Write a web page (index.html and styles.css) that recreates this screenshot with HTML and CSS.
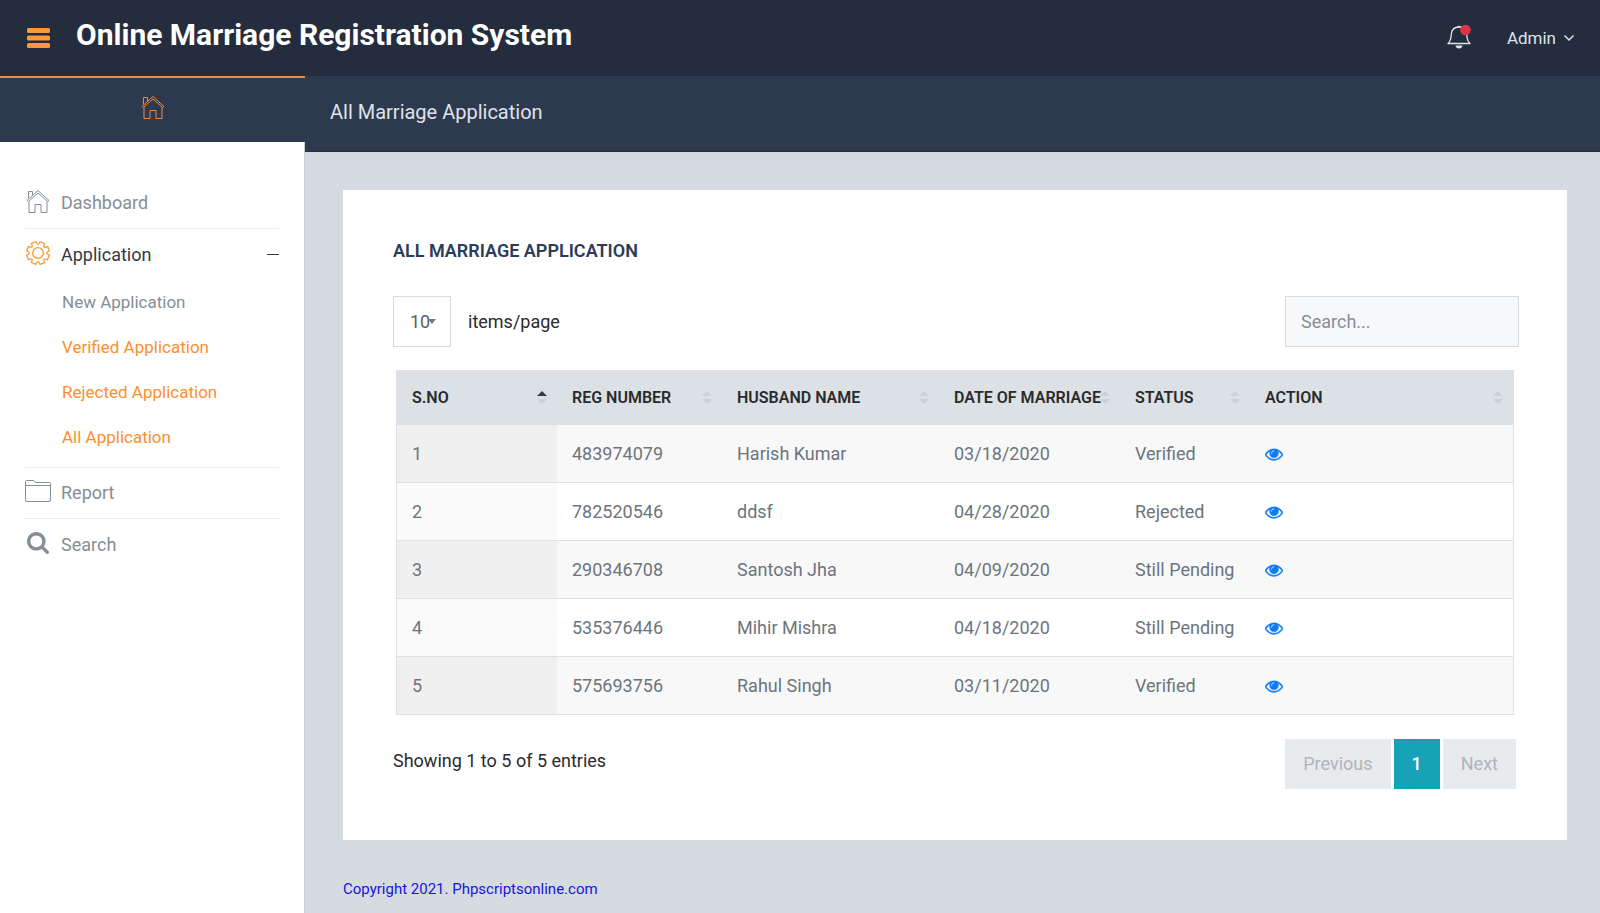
FILE: index.html
```html
<!DOCTYPE html>
<html lang="en">
<head>
<meta charset="utf-8">
<title>Online Marriage Registration System</title>
<link rel="stylesheet" href="styles.css">
</head>
<body>
<svg class="sprite" aria-hidden="true">
  <symbol id="house" viewBox="0 0 24 24"><path d="M1 11.500 12 1.500 23 11.500 21.800 12.700 12 4 2.200 12.700ZM2.500 9.500V2.500H6.500V6M3 12.500V23.500H9V15.500H15V23.500H21V12.500"/></symbol>
  <symbol id="eye" viewBox="0 0 1792 1792"><path d="M1664 960q-152-236-381-353 61 104 61 225 0 185-131.500 316.500t-316.500 131.500-316.500-131.500-131.500-316.500q0-121 61-225-229 117-381 353 133 205 333.500 326.500t434.500 121.500 434.500-121.500 333.500-326.500zm-720-384q0-20-14-34t-34-14q-125 0-214.500 89.500t-89.500 214.500q0 20 14 34t34 14 34-14 14-34q0-86 61-147t147-61q20 0 34-14t14-34zm848 384q0 34-20 69-140 230-376.500 368.500t-499.500 138.500-499.500-139-376.500-368q-20-35-20-69t20-69q140-229 376.500-368t499.500-139 499.500 139 376.500 368q20 35 20 69z"/></symbol>
  <symbol id="sort" viewBox="0 0 10 16"><path class="up" d="M0 6 5 1 10 6Z"/><path d="M0 9 5 14 10 9Z"/></symbol>
</svg>

<header class="topbar">
  <button class="menu-toggle" type="button" aria-label="Toggle menu">
    <svg viewBox="0 0 23 20"><rect width="23" height="5" rx="1.500"/><rect y="7.500" width="23" height="5" rx="1.500"/><rect y="15" width="23" height="5" rx="1.500"/></svg>
  </button>
  <h1 class="brand">Online Marriage Registration System</h1>
  <button class="bell" type="button" aria-label="Notifications">
    <svg viewBox="0 0 24 26"><path class="line" d="M1 19.500C3.500 17.500 4 15 4.300 10.500 4.600 5.500 7.500 3 12 3S19.400 5.500 19.700 10.500C20 15 20.500 17.500 23 19.500Z"/><path class="solid" d="M10 3Q12 .5 14 3ZM8.500 21.500H15.500Q15 24.500 12 24.500T8.500 21.500Z"/><circle class="dot" cx="18.500" cy="6" r="5.300"/></svg>
  </button>
  <button class="account" type="button">Admin
    <svg viewBox="0 0 10 8"><path d="M.5 1.500 5 6 9.500 1.500"/></svg>
  </button>
</header>

<div class="layout">
  <aside class="sidebar">
    <a class="home" href="#" aria-label="Home"><svg class="icon"><use href="#house"/></svg></a>
    <nav class="nav">
      <a class="nav-item" href="#"><svg class="icon"><use href="#house"/></svg>Dashboard</a>
      <div class="group">
        <a class="nav-item active" href="#"><svg class="icon gear" viewBox="0 0 24 24"><path transform="rotate(22.500 12 12)" d="M23.300 9.500 23.300 14.500Q17.300 14.200 21.800 18.300L18.300 21.800Q14.200 17.300 14.500 23.300L9.500 23.300Q9.800 17.300 5.700 21.800L2.200 18.300Q6.700 14.200 .7 14.500L.7 9.500Q6.700 9.800 2.200 5.700L5.700 2.200Q9.800 6.700 9.500 .7L14.500 .7Q14.200 6.700 18.300 2.200L21.800 5.700Q17.300 9.800 23.300 9.500Z"/><circle cx="12" cy="12" r="5.300"/></svg>Application<span class="minus"></span></a>
        <ul class="subnav">
          <li><a href="#">New Application</a></li>
          <li><a class="visited" href="#">Verified Application</a></li>
          <li><a class="visited" href="#">Rejected Application</a></li>
          <li><a class="visited" href="#">All Application</a></li>
        </ul>
      </div>
      <a class="nav-item" href="#"><svg class="icon folder" viewBox="0 0 26 24"><path d="M.5 21V2.500Q.5 1.500 1.500 1.500H8.500L10.500 3.500H24.500Q25.500 3.500 25.500 4.500V21Q25.500 22.500 24 22.500H2Q.5 22.500 .5 21ZM.5 6.500H25.500"/></svg>Report</a>
      <a class="nav-item" href="#"><svg class="icon solid" viewBox="64 128 1664 1664"><path d="M1216 832q0-185-131.500-316.500t-316.500-131.500-316.500 131.500-131.500 316.500 131.500 316.500 316.500 131.500 316.500-131.500 131.500-316.500zm512 832q0 52-38 90t-90 38q-54 0-90-38l-343-342q-179 124-399 124-143 0-273.500-55.500t-225-150-150-225-55.500-273.500 55.500-273.500 150-225 225-150 273.500-55.500 273.500 55.500 225 150 150 225 55.500 273.500q0 220-124 399l343 343q37 37 37 90z"/></svg>Search</a>
    </nav>
  </aside>

  <main class="content">
    <div class="page-header"><h2>All Marriage Application</h2></div>
    <section class="card">
      <h3>All Marriage Application</h3>
      <div class="tools">
        <label class="length"><span class="select"><select><option>10</option></select><svg viewBox="0 0 8 5"><path d="M0 0H8L4 5Z"/></svg></span>items/page</label>
        <input class="search" type="search" placeholder="Search..." aria-label="Search">
      </div>
      <table class="table">
        <colgroup><col class="c-no"><col class="c-reg"><col class="c-name"><col class="c-date"><col class="c-status"><col class="c-action"></colgroup>
        <thead><tr>
          <th class="asc">S.No<svg class="sort"><use href="#sort"/></svg></th>
          <th>Reg Number<svg class="sort"><use href="#sort"/></svg></th>
          <th>Husband Name<svg class="sort"><use href="#sort"/></svg></th>
          <th>Date of Marriage<svg class="sort"><use href="#sort"/></svg></th>
          <th>Status<svg class="sort"><use href="#sort"/></svg></th>
          <th>Action<svg class="sort"><use href="#sort"/></svg></th>
        </tr></thead>
        <tbody>
          <tr><td>1</td><td>483974079</td><td>Harish Kumar</td><td>03/18/2020</td><td>Verified</td><td><a href="#" aria-label="View"><svg class="eye"><use href="#eye"/></svg></a></td></tr>
          <tr><td>2</td><td>782520546</td><td>ddsf</td><td>04/28/2020</td><td>Rejected</td><td><a href="#" aria-label="View"><svg class="eye"><use href="#eye"/></svg></a></td></tr>
          <tr><td>3</td><td>290346708</td><td>Santosh Jha</td><td>04/09/2020</td><td>Still Pending</td><td><a href="#" aria-label="View"><svg class="eye"><use href="#eye"/></svg></a></td></tr>
          <tr><td>4</td><td>535376446</td><td>Mihir Mishra</td><td>04/18/2020</td><td>Still Pending</td><td><a href="#" aria-label="View"><svg class="eye"><use href="#eye"/></svg></a></td></tr>
          <tr><td>5</td><td>575693756</td><td>Rahul Singh</td><td>03/11/2020</td><td>Verified</td><td><a href="#" aria-label="View"><svg class="eye"><use href="#eye"/></svg></a></td></tr>
        </tbody>
      </table>
      <div class="table-footer">
        <p>Showing 1 to 5 of 5 entries</p>
        <div class="pagination">
          <button type="button">Previous</button>
          <button type="button" class="current">1</button>
          <button type="button">Next</button>
        </div>
      </div>
    </section>
    <footer class="footer"><a href="#">Copyright 2021. Phpscriptsonline.com</a></footer>
  </main>
</div>
</body>
</html>
```
FILE: styles.css
```css
* { box-sizing: border-box; }
body {
  margin: 0;
  min-height: 100vh;
  display: flex;
  flex-direction: column;
  font: 18px/26px Roboto, sans-serif;
  color: #292b2c;
  background: #d6dbe2;
}
h1, h2, h3, p, ul { margin: 0; padding: 0; }
a { color: inherit; text-decoration: none; }
button, input, select { font: inherit; color: inherit; border: 0; border-radius: 0; background: none; padding: 0; }
svg { display: block; flex: none; }
.sprite { position: absolute; width: 0; height: 0; }

.topbar {
  display: flex;
  align-items: center;
  height: 76px;
  padding: 0 26px 0 27px;
  background: #232d3e;
  color: #dfe3ea;
}
.menu-toggle svg { width: 23px; height: 20px; fill: #fc9a37; }
.brand {
  margin-left: 26px;
  padding-bottom: 6px;
  font-size: 30px;
  line-height: 40px;
  font-weight: 700;
  color: #fff;
}
.bell { margin-left: auto; padding-bottom: 2px; }
.bell svg { width: 24px; height: 26px; }
.bell .line { fill: none; stroke: #dfe3ea; stroke-width: 1.3; stroke-linejoin: round; }
.bell .solid { fill: #dfe3ea; }
.bell .dot { fill: #dc3545; }
.account { display: flex; align-items: center; gap: 8px; margin-left: 36px; font-size: 17px; }
.account svg { width: 10px; height: 8px; fill: none; stroke: #dfe3ea; stroke-width: 1.5; }

.layout { flex: 1; display: flex; }
.sidebar { width: 305px; flex: none; background: #fff; border-right: 1px solid #c5ccd4; }
.icon { width: 24px; height: 24px; fill: none; stroke: currentColor; stroke-width: 1; stroke-linejoin: round; }
.icon.gear { stroke-width: 1.3; overflow: visible; }
.icon.solid { width: 22px; height: 22px; margin-left: 1px; margin-right: 1px; fill: currentColor; stroke: none; }
.icon.folder { width: 26px; margin-left: -1px; margin-right: -1px; }
.home {
  display: flex;
  justify-content: center;
  padding: 17px 0 23px;
  margin-right: -1px;
  border-top: 2px solid #f28c3c;
  background: #2d394f;
  color: #f28c3c;
}
.nav { padding: 35px 25px 0; color: #868e96; }
.nav-item { display: flex; align-items: center; gap: 11px; height: 51px; padding-left: 1px; }
.nav-item .icon { margin-bottom: 4px; }
.nav-item + .nav-item, .nav-item + .group, .group + .nav-item { border-top: 1px solid #e9ebed; }
.nav-item + .nav-item { height: 52px; }
.nav-item.active { color: #343a40; }
.nav-item.active .icon { color: #fc9a37; }
.minus { width: 12px; height: 1px; margin-left: auto; background: #343a40; }
.subnav { list-style: none; padding: 0 0 7px 37px; font-size: 17px; line-height: 45px; }
.subnav a { display: block; }
.subnav .visited { color: #fc8f2f; }

.content { flex: 1; min-width: 0; }
.page-header { padding: 21px 25px 24px; background: #2d394f; border-bottom: 1px solid #232d3e; color: #dfe3ea; }
.page-header h2 { font-size: 20px; line-height: 30px; font-weight: 400; }
.card { margin: 38px 33px 0 38px; padding: 46px 48px 51px 50px; background: #fff; }
.card h3 { font-size: 18px; line-height: 30px; font-weight: 600; text-transform: uppercase; color: #2b3c58; }
.tools { display: flex; justify-content: space-between; margin-top: 30px; }
.length { display: flex; align-items: center; gap: 17px; }
.select { position: relative; }
.select select { display: block; width: 58px; height: 51px; padding: 0 16px; appearance: none; border: 1px solid #d6dbe2; color: #5a6067; }
.select svg { position: absolute; right: 15px; top: 23px; width: 8px; height: 5px; fill: #777; pointer-events: none; }
.search { width: 234px; height: 51px; padding: 0 15px; border: 1px solid #d6dbe2; background: #f7f8fa; appearance: none; }
.search::placeholder { color: #868e96; opacity: 1; }

.table {
  width: calc(100% - 8px);
  margin: 23px 5px 0 3px;
  border: 1px solid #dee2e6;
  border-spacing: 0;
  table-layout: fixed;
  color: #6c757d;
}
.c-no { width: 160px; }
.c-reg { width: 165px; }
.c-name { width: 217px; }
.c-date { width: 181px; }
.c-status { width: 130px; }
th, td { padding: 0 15px; text-align: left; white-space: nowrap; }
th { position: relative; height: 54px; font-size: 16px; font-weight: 600; text-transform: uppercase; color: #292b2c; background: #dce1e6; }
td { height: 58px; border-top: 1px solid #dee2e6; }
tbody tr:first-child td { height: 57px; border-top: 0; }
tbody tr:nth-child(odd) { background: #f8f8f9; }
tbody tr td:first-child { background: #fafafa; }
tbody tr:nth-child(odd) td:first-child { background: #f0f0f0; }
.sort { position: absolute; right: 10px; top: 19px; width: 10px; height: 16px; fill: #cbd1d6; }
.up { fill: var(--sort-up, #cbd1d6); }
.asc .sort { --sort-up: #343a40; }
.eye { width: 18px; height: 18px; fill: #0d7bf2; stroke: #0d7bf2; stroke-width: 40; }

.table-footer { display: flex; justify-content: space-between; margin-top: 24px; }
.table-footer p { padding-top: 9px; }
.pagination { display: flex; gap: 3px; margin-right: 3px; }
.pagination button { height: 50px; padding: 0 18px; background: #e8ebee; color: #adb5bd; }
.pagination .current { background: #17a2b8; color: #fff; font-weight: 500; }
.footer { padding: 36px 38px 12px; font-size: 15px; color: #1616d8; }
```
